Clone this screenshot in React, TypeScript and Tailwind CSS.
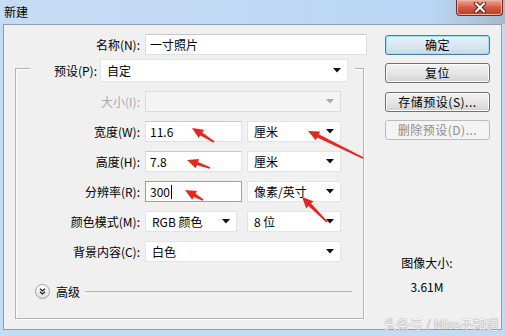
import React from "react";

const Arrow = ({ hx, hy, tx, ty }: { hx: number; hy: number; tx: number; ty: number }) => {
  const dx = hx - tx;
  const dy = hy - ty;
  const len = Math.sqrt(dx * dx + dy * dy);
  const ux = dx / len;
  const uy = dy / len;
  const nx = -uy;
  const ny = ux;
  const L = Math.min(11, len * 0.55);
  const bx = hx - ux * L;
  const by = hy - uy * L;
  const p = (x: number, y: number) => `${x.toFixed(1)},${y.toFixed(1)}`;
  const pts = [
    p(tx + nx * 0.8, ty + ny * 0.8),
    p(bx + nx * 1.8, by + ny * 1.8),
    p(bx + nx * 5, by + ny * 5),
    p(hx, hy),
    p(bx - nx * 5, by - ny * 5),
    p(bx - nx * 1.8, by - ny * 1.8),
    p(tx - nx * 0.8, ty - ny * 0.8),
  ].join(" ");
  return <polygon points={pts} fill="#e8261f" />;
};

const Caret = ({ gray }: { gray?: boolean }) => (
  <svg width="8" height="5" viewBox="0 0 8 5">
    <polygon points="0,0 8,0 4,4.5" fill={gray ? "#a8a8a8" : "#111"} />
  </svg>
);

const Dropdown = ({ w, text, disabled }: { w: string; text?: string; disabled?: boolean }) => (
  <div
    className={`${w} h-[21px] flex items-center justify-between pl-[6px] pr-[6px] border ${
      disabled ? "bg-[#f4f4f4] border-[#dcdcdc]" : "bg-white border-[#e4e4e4]"
    }`}
  >
    <span className="leading-[16px] whitespace-nowrap">{text}</span>
    <Caret gray={disabled} />
  </div>
);

const Input = ({ w, text, focus }: { w: string; text: string; focus?: boolean }) => (
  <div
    className={`${w} h-[21px] flex items-center pl-[4px] bg-white border ${
      focus ? "border-[#7aa7d6]" : "border-[#e0e0e0] border-t-[#c8c8c8]"
    }`}
  >
    <span className="leading-[16px] whitespace-nowrap">{text}</span>
    {focus && <span className="w-px h-[14px] bg-black ml-[1px]" />}
  </div>
);

const Button = ({ text, kind }: { text: string; kind?: "default" | "disabled" }) => {
  const cls =
    kind === "default"
      ? "border-[#3c7fb1] bg-linear-to-b from-[#e8f2fa] via-[#dbe8f2] to-[#c9d9e6] shadow-[inset_0_0_0_1px_#9fdcf7] text-black"
      : kind === "disabled"
      ? "border-[#b8bcbf] bg-[#f4f4f4] text-[#8c8c8c]"
      : "border-[#707070] bg-linear-to-b from-[#f3f3f3] via-[#e6e6e6] to-[#d2d2d2] shadow-[inset_0_0_0_1px_#fcfcfc] text-black";
  return (
    <div className={`w-[105px] h-[20px] rounded-[3px] border flex items-center justify-center ${cls}`}>
      <span className="leading-[16px] tracking-[0.5px]">{text}</span>
    </div>
  );
};

const Row = ({ label, children, gray }: { label: string; children: React.ReactNode; gray?: boolean }) => (
  <div className="mt-[9px] h-[21px] flex items-center">
    <span className={`w-[124px] text-right leading-[16px] ${gray ? "text-[#a9a9a9]" : "text-black"}`}>{label}</span>
    <div className="ml-[5px] flex items-center">{children}</div>
  </div>
);

export default function App() {
  return (
    <div className="relative w-[505px] h-[336px] overflow-hidden bg-[#c4dbf2] text-[12px] text-black font-['Microsoft_YaHei','Noto_Sans_CJK_SC',sans-serif]">
      {/* title bar */}
      <div className="h-[24px] flex items-start justify-between bg-linear-to-r from-[#c6dcf3] via-[#bbd7f5] via-85% to-[#a6bacd]">
        <span className="pl-[4px] pt-[3px] leading-[18px] text-[12px]">新建</span>
        <div className="mr-[2px] w-[47px] h-[16px] rounded-b-[4px] border border-t-0 border-[#6e2b22] bg-linear-to-b from-[#e9a99a] via-[#d45a45] to-[#c3381f] shadow-[inset_0_0_0_1px_#f0b3a6] flex items-center justify-center">
          <svg width="14" height="11" viewBox="0 0 14 11">
            <path d="M3 1.5 L11 9.5 M11 1.5 L3 9.5" stroke="#5a1a12" strokeWidth="4" strokeLinecap="round" />
            <path d="M3 1.5 L11 9.5 M11 1.5 L3 9.5" stroke="#ffffff" strokeWidth="2.2" strokeLinecap="round" />
          </svg>
        </div>
      </div>

      {/* body */}
      <div className="mx-[3px] h-[306px] border border-[#8b9db2] bg-[#f0f0f0] flex">
        {/* left column */}
        <div className="w-[364px] shrink-0 pt-[9px]">
          <div className="h-[21px] flex items-center">
            <span className="w-[136px] text-right leading-[16px]">名称(N):</span>
            <div className="ml-[5px]">
              <Input w="w-[222px]" text="一寸照片" />
            </div>
          </div>

          {/* group box */}
          <div className="mt-[13px] ml-[11px] w-[349px] h-[251px] border border-[#b3b3b3] shadow-[1px_1px_0_#ffffff,inset_1px_1px_0_#ffffff]">
            <div className="-mt-[10px] ml-[14px] w-[325px] h-[23px] bg-[#f0f0f0] flex items-center">
              <span className="w-[67px] text-right leading-[16px]">预设(P):</span>
              <div className="ml-[3px]">
                <Dropdown w="w-[248px] h-[23px]" text="自定" />
              </div>
            </div>

            <Row label="大小(I):" gray>
              <Dropdown w="w-[196px]" disabled />
            </Row>
            <Row label="宽度(W):">
              <Input w="w-[97px]" text="11.6" />
              <div className="ml-[5px]">
                <Dropdown w="w-[94px]" text="厘米" />
              </div>
            </Row>
            <Row label="高度(H):">
              <Input w="w-[97px]" text="7.8" />
              <div className="ml-[5px]">
                <Dropdown w="w-[94px]" text="厘米" />
              </div>
            </Row>
            <Row label="分辨率(R):">
              <Input w="w-[97px]" text="300" focus />
              <div className="ml-[5px]">
                <Dropdown w="w-[94px]" text="像素/英寸" />
              </div>
            </Row>
            <Row label="颜色模式(M):">
              <Dropdown w="w-[92px]" text="RGB 颜色" />
              <div className="ml-[10px]">
                <Dropdown w="w-[94px]" text="8 位" />
              </div>
            </Row>
            <Row label="背景内容(C):">
              <Dropdown w="w-[196px]" text="白色" />
            </Row>

            <div className="mt-[22px] h-[15px] flex items-center">
              <div className="ml-[19px] w-[15px] h-[15px] rounded-full border border-[#a0a0a0] bg-linear-to-b from-[#ffffff] to-[#dedede] flex items-center justify-center">
                <svg width="7" height="7" viewBox="0 0 7 7">
                  <path d="M1 0.8 L3.5 3 L6 0.8 M1 3.8 L3.5 6 L6 3.8" stroke="#222" strokeWidth="1.3" fill="none" />
                </svg>
              </div>
              <span className="ml-[6px] leading-[16px]">高级</span>
              <div className="ml-[5px] mr-[11px] flex-1 h-px bg-[#b3b3b3]" />
            </div>
          </div>
        </div>

        {/* right column */}
        <div className="flex-1 flex flex-col pt-[10px]">
          <div className="ml-[17px] flex flex-col">
            <Button text="确定" kind="default" />
            <div className="mt-[8px]">
              <Button text="复位" />
            </div>
            <div className="mt-[9px]">
              <Button text="存储预设(S)..." />
            </div>
            <div className="mt-[8px]">
              <Button text="删除预设(D)..." kind="disabled" />
            </div>
          </div>
          <div className="mt-[115px] pr-[15px] text-center">
            <div className="leading-[16px]">图像大小:</div>
            <div className="mt-[8px] leading-[16px]">3.61M</div>
          </div>
        </div>
      </div>

      {/* watermark */}
      <div className="absolute right-[6px] bottom-[4px] text-[13px] leading-[16px] text-[#f4f4f4] [text-shadow:0_0_1px_#9a9a9a,0_0_1px_#9a9a9a]">
        头条号 / Miss不知道
      </div>

      {/* red annotation arrows */}
      <svg className="absolute inset-0 pointer-events-none" width="505" height="336" viewBox="0 0 505 336">
        <Arrow hx={192} hy={128} tx={214} ty={142} />
        <Arrow hx={308} hy={131} tx={363} ty={158} />
        <Arrow hx={187} hy={160} tx={210} ty={168} />
        <Arrow hx={185} hy={190} tx={203} ty={200} />
        <Arrow hx={302} hy={197} tx={327} ty={222} />
      </svg>
    </div>
  );
}
